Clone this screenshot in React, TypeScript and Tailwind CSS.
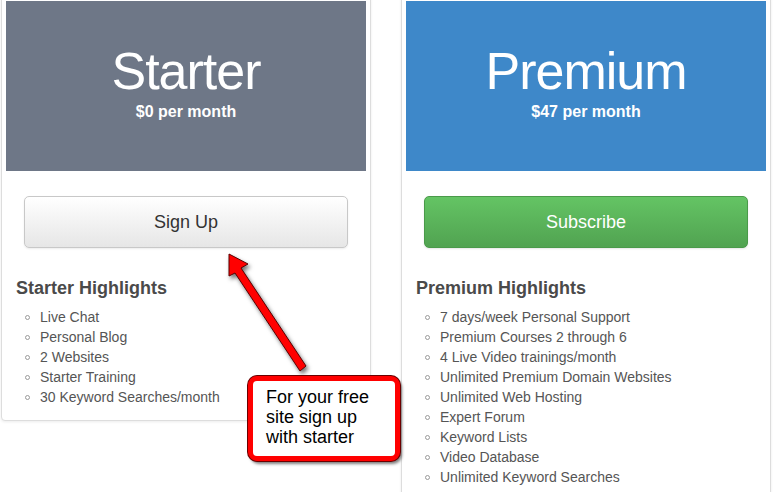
const starter = [
  "Live Chat",
  "Personal Blog",
  "2 Websites",
  "Starter Training",
  "30 Keyword Searches/month",
];

const premium = [
  "7 days/week Personal Support",
  "Premium Courses 2 through 6",
  "4 Live Video trainings/month",
  "Unlimited Premium Domain Websites",
  "Unlimited Web Hosting",
  "Expert Forum",
  "Keyword Lists",
  "Video Database",
  "Unlimited Keyword Searches",
];

interface PlanProps {
  name: string;
  price: string;
  headerClass: string;
  button: React.ReactNode;
  items: string[];
}

function Plan({ name, price, headerClass, button, items }: PlanProps) {
  return (
    <div className="w-[370px] shrink-0 self-start rounded-[4px] border border-[#dddddd] bg-white p-[4px] pb-[13px] shadow-[0_1px_3px_rgba(0,0,0,0.08)]">
      <div className={`h-[170px] pt-[44px] text-center text-white ${headerClass}`}>
        <div className="text-[52px] leading-[52px] tracking-[-1px]">{name}</div>
        <div className="mt-[5px] text-[16px] font-bold leading-[20px]">{price}</div>
      </div>
      <div className="mx-[18px] mt-[25px]">{button}</div>
      <h3 className="mt-[30px] px-[10px] text-[18px] font-bold leading-[20px] text-[#4a4a4a]">
        {name} Highlights
      </h3>
      <ul className="mt-[9px] pl-[19px] text-[14px] leading-[20px] text-[#555555]">
        {items.map((item) => (
          <li key={item} className="flex items-center">
            <span className="mr-[10px] h-[5px] w-[5px] shrink-0 rounded-full border border-[#9a9a9a]" />
            {item}
          </li>
        ))}
      </ul>
    </div>
  );
}

export default function App() {
  return (
    <div className="relative h-[492px] w-[779px] overflow-hidden bg-white font-['Liberation_Sans',Arial,sans-serif]">
      <div className="-mt-[4px] flex gap-[30px] pl-[1px]">
        <Plan
          name="Starter"
          price="$0 per month"
          headerClass="bg-[#6e7787]"
          items={starter}
          button={
            <button className="h-[52px] w-full rounded-[5px] border border-[#c8c8c8] bg-gradient-to-b from-white to-[#e6e6e6] text-[18px] text-[#333333] shadow-[0_1px_2px_rgba(0,0,0,0.08)]">
              Sign Up
            </button>
          }
        />
        <Plan
          name="Premium"
          price="$47 per month"
          headerClass="bg-[#3e88c9]"
          items={premium}
          button={
            <button className="h-[52px] w-full rounded-[5px] border border-[#4a9a4a] bg-gradient-to-b from-[#64c464] to-[#51a351] text-[18px] text-white shadow-[0_1px_2px_rgba(0,0,0,0.1)]">
              Subscribe
            </button>
          }
        />
      </div>

      {/* annotation arrow */}
      <svg
        className="absolute left-0 top-0 drop-shadow-[2px_3px_2px_rgba(0,0,0,0.55)]"
        width="779"
        height="492"
      >
        <polygon
          points="229,254 248,264 241,268 306,366 300,371 235,273 229,276"
          fill="#ff0000"
          stroke="#5a0000"
          strokeWidth="1"
          strokeLinejoin="round"
        />
      </svg>

      {/* annotation callout */}
      <div className="absolute left-[248px] top-[376px] h-[85px] w-[152px] rounded-[9px] border-[5px] border-[#ff0000] bg-white pl-[13px] pt-[6px] text-[18px] leading-[20px] text-black shadow-[0_0_0_1px_#6a0000,2px_3px_3px_rgba(0,0,0,0.5)]">
        For your free
        <br />
        site sign up
        <br />
        with starter
      </div>
    </div>
  );
}
